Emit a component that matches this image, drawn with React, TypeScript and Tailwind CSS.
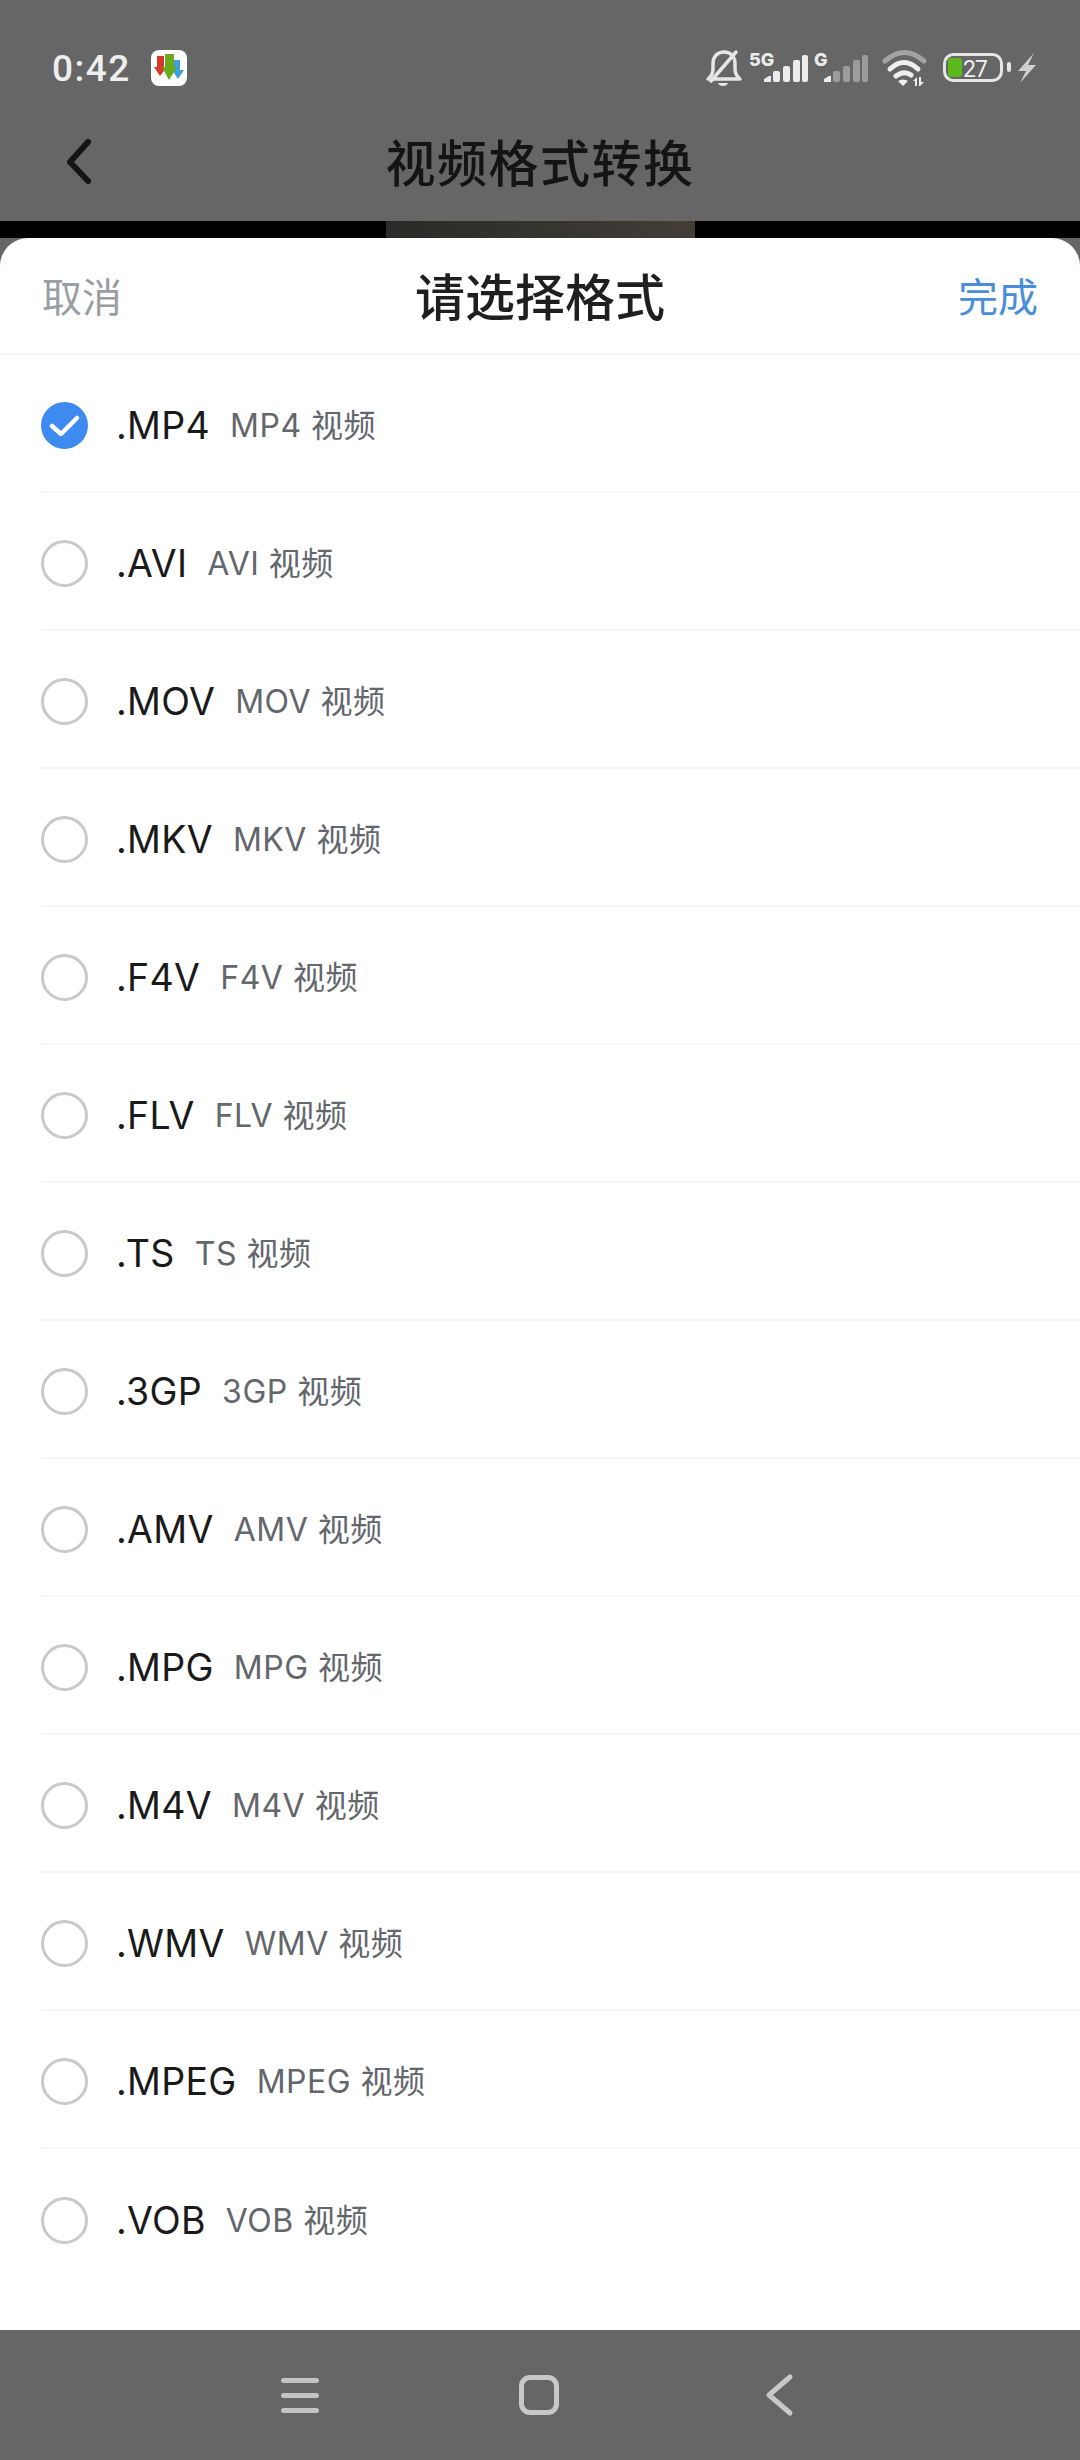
const formats = ["MP4", "AVI", "MOV", "MKV", "F4V", "FLV", "TS", "3GP", "AMV", "MPG", "M4V", "WMV", "MPEG", "VOB"];

const cjk = "font-['Inter','Noto_Sans_CJK_SC',sans-serif]";

function AppBadge() {
  return (
    <svg width="36" height="36" viewBox="0 0 36 36">
      <rect width="36" height="36" rx="8" fill="#ffffff" />
      <path d="M6 6h7v11h3l-7 9-6-9h3z" fill="#d8392f" />
      <path d="M23 10h6v10h4l-6 9-6-9h2z" fill="#3f9fe0" />
      <path d="M14 4h9v13h3l-8 13-7-13h3z" fill="#6aaa1e" />
    </svg>
  );
}

function SignalBars({ x, dim }: { x: number; dim: string }) {
  return (
    <g transform={`translate(${x} 0)`}>
      <path d="M0 82v-3l5-3h2v6z" fill="#ececec" />
      <rect x="9" y="71" width="7" height="11" rx="2" fill={dim} />
      <rect x="19" y="66" width="7" height="16" rx="2" fill={dim} />
      <rect x="29" y="60" width="7" height="22" rx="2" fill={dim} />
      <rect x="38" y="55" width="6" height="27" rx="2" fill={dim} />
    </g>
  );
}

function StatusIcons() {
  return (
    <svg width="340" height="48" viewBox="700 44 340 48">
      <g fill="none" stroke="#e6e6e6" strokeWidth="3.500" strokeLinecap="round" strokeLinejoin="round">
        <path d="M708 79q5-4 5-10v-5c0-8 5-12 11-12 7 0 11 5 11 12v5q0 6 5 10z" />
        <path d="M711 81 736 52" />
      </g>
      <path d="M718 83h10q-1 3-5 3t-5-3z" fill="#e6e6e6" />
      <text x="749" y="66" fontSize="18" fontWeight="800" fill="#ececec" fontFamily="Inter">5G</text>
      <SignalBars x={764} dim="#ececec" />
      <text x="814" y="66" fontSize="18" fontWeight="800" fill="#ececec" fontFamily="Inter">G</text>
      <SignalBars x={824} dim="#9c9c9c" />

      <g fill="none" strokeLinecap="round">
        <path d="M885 61Q904.500 44 924 61" stroke="#a3a3a3" strokeWidth="5" />
        <path d="M890 69Q904 56 918 69" stroke="#f0f0f0" strokeWidth="5" />
        <path d="M896 76Q904 70 911 75" stroke="#f0f0f0" strokeWidth="5" />
      </g>
      <path d="M898 81q5-3 10 0l-5 5z" fill="#f0f0f0" />
      <path d="M913 81l4-4v9h-2v-5zM919 77h2v5h3l-4 4h-1z" fill="#eeeeee" />

      <rect x="944.500" y="54.500" width="57" height="26" rx="9" fill="none" stroke="#e6e6e6" strokeWidth="3" />
      <rect x="948" y="58" width="14" height="19" rx="3" fill="#5cb91c" />
      <text x="963" y="77" fontSize="23" letterSpacing="-1" fill="#f0f0f0" fontFamily="Roboto">27</text>
      <rect x="1007" y="62" width="4" height="10" rx="2" fill="#e6e6e6" />
      <path d="M1034 53 1018 71h8l-6 12 16-18h-8l6-12z" fill="#cfcfcf" />
    </svg>
  );
}

function StatusBar() {
  return (
    <div className="flex h-[112px] items-center justify-between pl-[52px] pr-[40px] pt-[24px]">
      <div className="flex items-center gap-[20px]">
        <span className="font-['Roboto',sans-serif] text-[37px] font-medium leading-none tracking-[1.5px] text-[#eeeeee]">0:42</span>
        <AppBadge />
      </div>
      <StatusIcons />
    </div>
  );
}

function TopBar() {
  return (
    <div className="relative flex h-[109px] items-center justify-center pb-[6px]">
      <svg className="absolute left-[62px] top-[25px]" width="32" height="50" viewBox="0 0 32 50">
        <path d="M26 5 8 25l18 19" fill="none" stroke="#141414" strokeWidth="6" strokeLinecap="round" strokeLinejoin="round" />
      </svg>
      <h1 className="text-[50px] font-medium leading-none tracking-[1.5px] text-[#141414]">视频格式转换</h1>
    </div>
  );
}

function FormatRow({ name, selected, last }: { name: string; selected: boolean; last: boolean }) {
  return (
    <div className={`flex h-[138px] items-center pt-[4px] ${last ? "" : "border-b-2 border-[#f6f6f6]"}`}>
      {selected ? (
        <svg width="47" height="47" viewBox="0 0 47 47" className="shrink-0">
          <circle cx="23.500" cy="23.500" r="23.500" fill="#3d8bf0" />
          <path d="M11 24l9 8 16-16" fill="none" stroke="#ffffff" strokeWidth="4.500" strokeLinecap="round" strokeLinejoin="round" />
        </svg>
      ) : (
        <div className="h-[47px] w-[47px] shrink-0 rounded-full border-[3px] border-[#c9c9c9]" />
      )}
      <span className="ml-[28px] mt-[2px] text-[37.500px] leading-none tracking-[0.3px] text-[#1a1a1a]">.{name}</span>
      <span className="ml-[20px] mt-[2px] text-[32px] leading-none tracking-[0.5px] text-[#63666c]">{name} 视频</span>
    </div>
  );
}

export default function App() {
  return (
    <div className={`flex h-[2460px] w-[1080px] flex-col overflow-hidden bg-[#666666] ${cjk}`}>
      <StatusBar />
      <TopBar />
      <div className="flex h-[17px] justify-center bg-black">
        <div className="h-full w-[309px] bg-gradient-to-r from-[#2a2a28] to-[#423e37]" />
      </div>
      <div className="flex h-[2092px] flex-col rounded-t-[28px] bg-white">
        <div className="flex h-[117px] items-center justify-between border-b-2 border-[#f6f6f6] px-[42px] pt-[5px]">
          <span className="text-[40px] leading-none text-[#9a9da3]">取消</span>
          <span className="text-[50px] font-medium leading-none text-[#1f1f1f]">请选择格式</span>
          <span className="text-[40px] leading-none text-[#4a8ddc]">完成</span>
        </div>
        <div className="flex flex-col pl-[41px]">
          {formats.map((name, i) => (
            <FormatRow key={name} name={name} selected={i === 0} last={i === formats.length - 1} />
          ))}
        </div>
      </div>
      <div className="flex h-[130px] items-center pl-[281px]">
        <div className="flex w-[38px] flex-col gap-[10px]">
          <div className="h-[5px] rounded-full bg-[#c4c4c4]" />
          <div className="h-[5px] rounded-full bg-[#c4c4c4]" />
          <div className="h-[5px] rounded-full bg-[#c4c4c4]" />
        </div>
        <div className="ml-[200px] h-[40px] w-[40px] rounded-[11px] border-[5px] border-[#c8c8c8]" />
        <svg className="ml-[206px]" width="30" height="44" viewBox="0 0 30 44">
          <path d="M25 4 4 22l21 18" fill="none" stroke="#c8c8c8" strokeWidth="5" strokeLinecap="round" strokeLinejoin="round" />
        </svg>
      </div>
    </div>
  );
}
